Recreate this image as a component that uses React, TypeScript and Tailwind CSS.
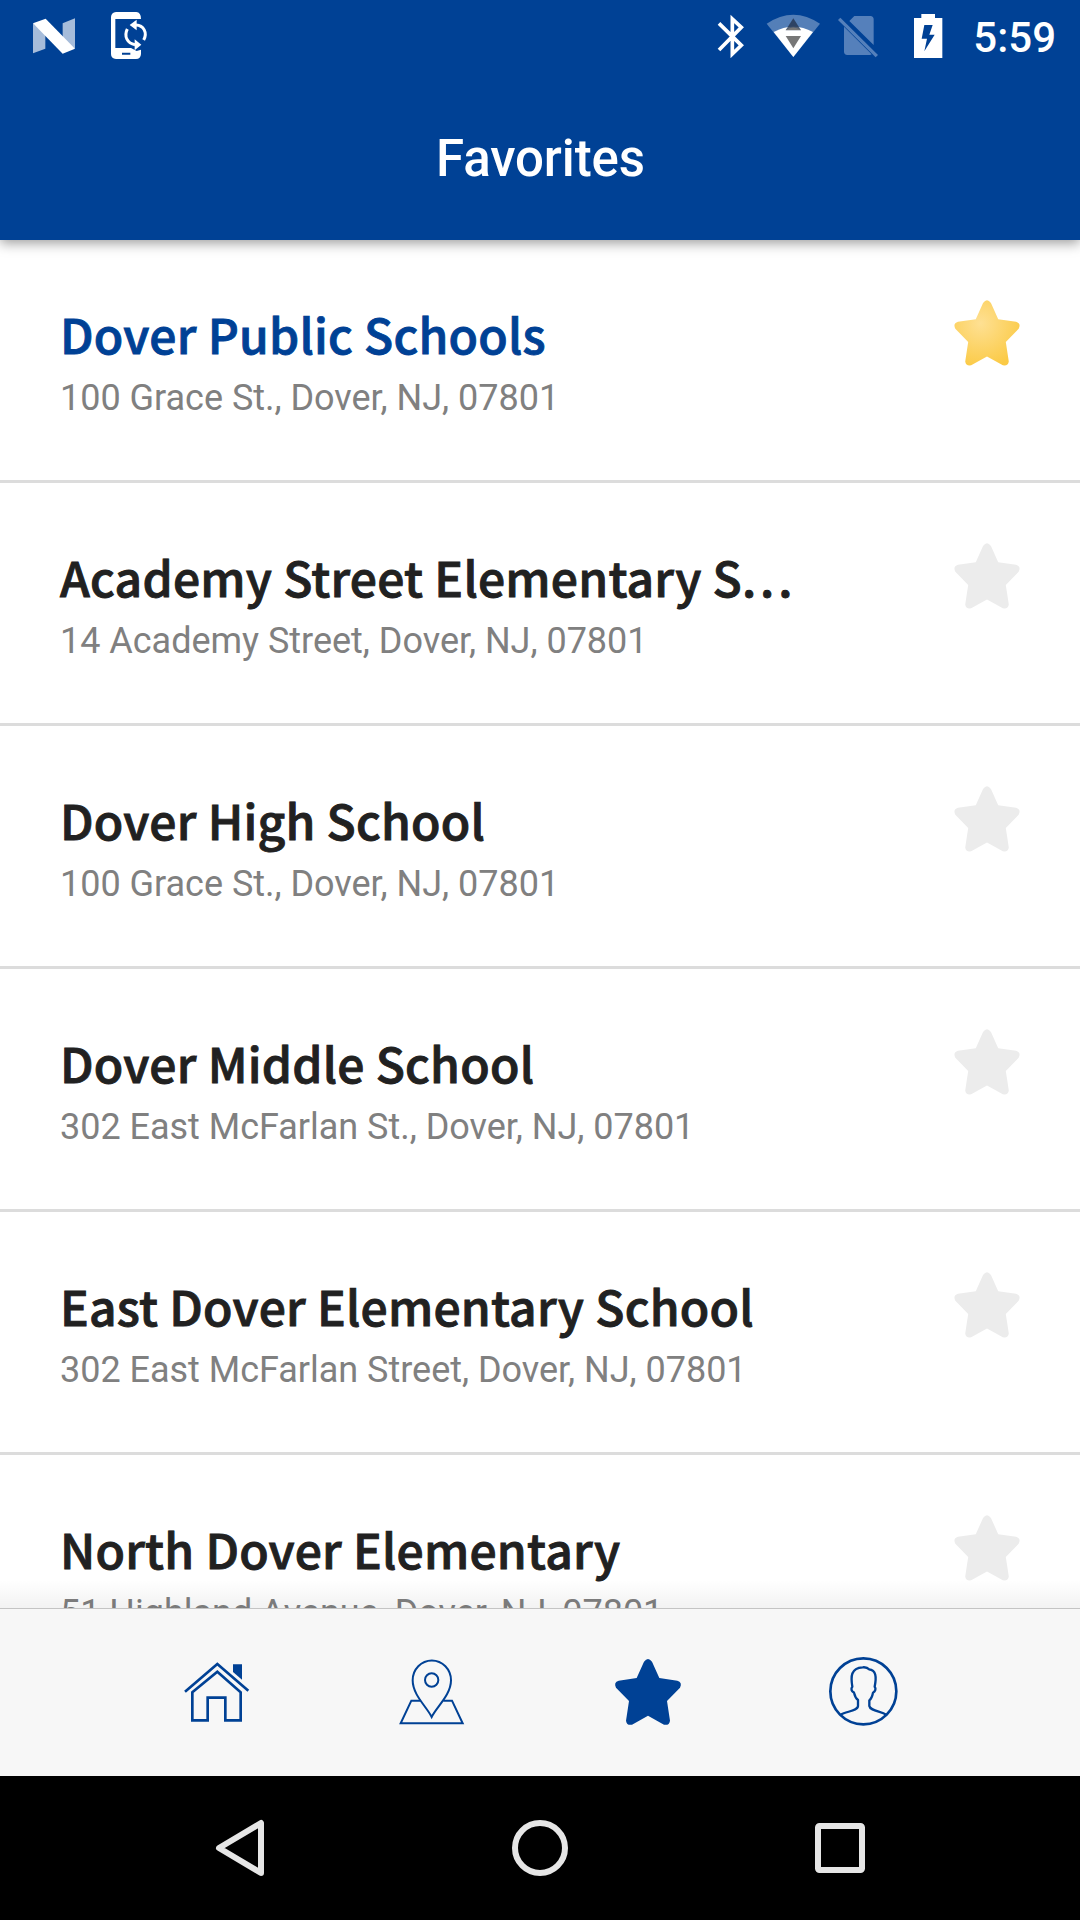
import { FC, ReactNode } from "react";
import clsx from "clsx";

const STAR_PATH =
  "M162 65 Q174 49 186 65 L208 114 L262 122 Q278 127 270 143 L231 183 L240 242 Q238 257 222 254 L174 227 L126 254 Q110 257 108 242 L117 183 L78 143 Q70 127 86 122 L140 114Z";

const schools = [
  {
    name: "Dover Public Schools",
    address: "100 Grace St., Dover, NJ, 07801",
    favorite: true,
  },
  {
    name: "Academy Street Elementary S",
    address: "14 Academy Street, Dover, NJ, 07801",
    clipped: true,
  },
  {
    name: "Dover High School",
    address: "100 Grace St., Dover, NJ, 07801",
  },
  {
    name: "Dover Middle School",
    address: "302 East McFarlan St., Dover, NJ, 07801",
  },
  {
    name: "East Dover Elementary School",
    address: "302 East McFarlan Street, Dover, NJ, 07801",
  },
  {
    name: "North Dover Elementary",
    address: "51 Highland Avenue, Dover, NJ, 07801",
  },
];

const StatusBar: FC = () => {
  return (
    <div className="flex h-[72px] items-center pl-[18px] pr-[24px] text-white">
      <svg width="72" height="72" viewBox="54 0 216 216" fill="#fff">
        <path d="M99 70L136 96V146L99 160Z" opacity=".65" />
        <path d="M188 70L225 55V146L188 120Z" opacity=".65" />
        <path d="M99 70L137 56L225 146L188 161Z" />
      </svg>
      <svg
        className="ml-1"
        width="72"
        height="72"
        viewBox="282 0 216 216"
        fill="#fff"
      >
        <path
          d="M348 36H409Q423 37 423 57H346V144H393L410 153L423 149V162Q422 177 408 177H348Q333 176 333 162V51Q334 37 348 36ZM366 158V164H391V158Z"
          fillRule="evenodd"
        />
        <path
          d="M382 87C371 109 382 131 405 134M431 120C443 98 431 76 408 75"
          fill="none"
          stroke="#fff"
          strokeWidth="9"
        />
        <path d="M389 75L410 59V91ZM424 134L404 118V151Z" />
      </svg>

      <svg
        className="ml-auto"
        width="60"
        height="72"
        viewBox="33 0 180 216"
        fill="none"
        stroke="#fff"
        strokeWidth="11"
      >
        <path d="M87 70L154 136L127 162V57L154 82L87 150" />
      </svg>
      <svg
        className="ml-[2px]"
        width="60"
        height="72"
        viewBox="219 0 180 216"
        fill="#fff"
      >
        <path d="M230 71Q310 17 390 71L310 171Z" opacity=".33" />
        <path d="M251 96Q310 65 369 96L310 171Z" />
        <path d="M310 55L333 91H287Z" fill="#24344f" opacity=".8" />
        <path d="M287 90Q310 75 333 90Z" fill="#777" />
        <path d="M287 108H333L310 145Z" fill="#777" />
      </svg>
      <svg
        className="ml-[5px]"
        width="60"
        height="72"
        viewBox="414 0 180 216"
        fill="#5580bb"
      >
        <path d="M493 48H541Q551 49 551 58V135L478 63ZM462 80L545 163Q543 165 539 165H472Q462 164 462 155Z" />
        <path d="M444 60L451 53L564 165L557 172Z" />
      </svg>
      <svg
        className="ml-[10px]"
        width="60"
        height="72"
        viewBox="624 0 180 216"
        fill="#fff"
      >
        <path
          d="M694 42H735V54H757V174H672V54H694ZM703 75L695 116H711L703 154L734 104H718L728 75Z"
          fillRule="evenodd"
        />
      </svg>
      <span className="ml-[15px] pt-[3px] text-[42px] leading-none font-medium">
        5:59
      </span>
    </div>
  );
};

const Star: FC<{ favorite?: boolean }> = ({ favorite }) => {
  return (
    <svg
      className="mt-[60px] shrink-0"
      width="66"
      height="66"
      viewBox="75 56 198 200"
    >
      <defs>
        <radialGradient id="gold" cx="0.4" cy="0.35" r="0.7">
          <stop offset="0" stopColor="#fee093" />
          <stop offset="1" stopColor="#fbca45" />
        </radialGradient>
      </defs>
      <path d={STAR_PATH} fill={favorite ? "url(#gold)" : "#ececec"} />
    </svg>
  );
};

const tabs: { label: string; icon: ReactNode }[] = [
  {
    label: "Home",
    icon: (
      <svg width="72" height="72" viewBox="60 48 216 216" fill="none" stroke="#004195">
        <path d="M75 155L172 72L265 152" strokeWidth="8" />
        <path
          d="M97 157L172 95L242 157V241H196V173H143V241H97Z"
          strokeWidth="8"
        />
        <path d="M219 73H246V119L219 96Z" fill="#004195" stroke="none" />
      </svg>
    ),
  },
  {
    label: "Map",
    icon: (
      <svg width="72" height="72" viewBox="48 48 216 216" fill="none" stroke="#004195" strokeWidth="6">
        <path d="M155 231C140 200 98 165 98 121A57 59 0 0 1 213 121C213 165 170 200 155 231Z" />
        <circle cx="155" cy="120" r="20" />
        <path d="M122 182H94L62 250H248L216 182H190" />
      </svg>
    ),
  },
  {
    label: "Favorites",
    icon: (
      <svg width="72" height="72" viewBox="66 48 216 216" fill="#004195">
        <path d={STAR_PATH} />
      </svg>
    ),
  },
  {
    label: "Profile",
    icon: (
      <svg width="72" height="72" viewBox="84 48 216 216" fill="none" stroke="#004195" strokeWidth="8">
        <circle cx="190" cy="154" r="99" />
        <path
          d="M122 224C140 214 174 212 174 198V180C166 174 164 166 162 158C154 154 152 146 157 140C152 110 152 84 188 82C198 81 203 83 207 88C228 90 230 110 224 140C229 146 226 154 219 158C217 168 214 176 208 181V198C210 212 242 214 259 224"
          strokeWidth="7"
          strokeLinejoin="round"
        />
      </svg>
    ),
  },
];

const App: FC = () => {
  return (
    <div className="flex h-[1920px] w-[1080px] flex-col overflow-hidden bg-white font-['Roboto',sans-serif]">
      <header className="relative z-10 h-[240px] shrink-0 bg-[#004195] shadow-[0_3px_12px_rgba(0,0,0,0.4)]">
        <StatusBar />
        <h1 className="pt-[57px] pl-px text-center text-[51px] leading-[60px] font-medium tracking-[-0.1px] text-white">
          Favorites
        </h1>
      </header>

      <main className="relative min-h-0 flex-1 overflow-hidden">
        {schools.map((school) => (
          <div
            key={school.name}
            className="flex h-[243px] items-start justify-between border-b-[3px] border-[#dcdcdc] px-[60px]"
          >
            <div className="pt-[58px]">
              <h2
                className={clsx(
                  "text-[48px] leading-[70px] font-medium tracking-[0.23px] whitespace-nowrap font-['Noto_Sans_CJK_SC',sans-serif] [-webkit-text-stroke:0.9px]",
                  school.favorite ? "text-[#004195]" : "text-[#212121]"
                )}
              >
                {school.name}
                {school.clipped && (
                  <span className="tracking-[3.8px]">...</span>
                )}
              </h2>
              <p className="pt-[5px] text-[36px] leading-[50px] tracking-[-0.02px] text-[#808080]">
                {school.address}
              </p>
            </div>
            <Star favorite={school.favorite} />
          </div>
        ))}
        <div className="absolute inset-x-0 bottom-0 h-7 bg-linear-to-t from-black/5 to-transparent" />
      </main>

      <nav className="flex h-[168px] shrink-0 items-center justify-center border-t border-[#c4c4c4] bg-[#f7f7f7] pb-[2px]">
        {tabs.map((tab) => (
          <button
            key={tab.label}
            aria-label={tab.label}
            className="flex w-[216px] justify-center"
          >
            {tab.icon}
          </button>
        ))}
      </nav>

      <footer className="flex h-[144px] shrink-0 items-center justify-between bg-black px-[210px]">
        <svg width="60" height="60" fill="none" stroke="#e6e6e6" strokeWidth="6">
          <path d="M51 5V55L9 30Z" strokeLinejoin="round" />
        </svg>
        <svg width="60" height="60" fill="none" stroke="#e6e6e6" strokeWidth="6">
          <circle cx="30" cy="30" r="25" />
        </svg>
        <svg width="60" height="60" fill="none" stroke="#e6e6e6" strokeWidth="6">
          <rect x="8" y="8" width="44" height="44" rx="1.5" />
        </svg>
      </footer>
    </div>
  );
};

export default App;
